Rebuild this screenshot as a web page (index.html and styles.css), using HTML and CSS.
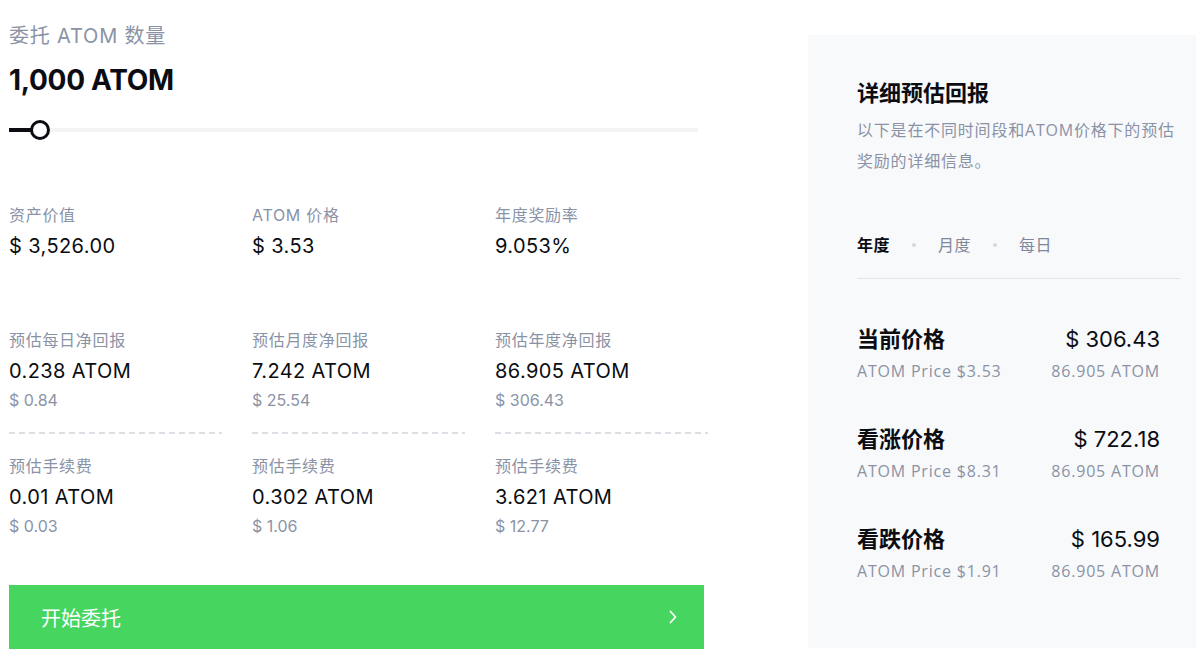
FILE: index.html
```html
<!DOCTYPE html>
<html lang="zh-CN">
<head>
<meta charset="utf-8">
<title>委托计算</title>
<link rel="stylesheet" href="styles.css">
</head>
<body>
<div class="page">
  <section class="calc">
    <div class="amount-label">委托 ATOM 数量</div>
    <div class="amount-value">1,000 ATOM</div>
    <div class="slider">
      <div class="slider-fill"></div>
      <div class="slider-knob"></div>
      <div class="slider-track"></div>
    </div>

    <div class="stats stats-top">
      <div class="stat">
        <div class="stat-label">资产价值</div>
        <div class="stat-value">$ 3,526.00</div>
      </div>
      <div class="stat">
        <div class="stat-label">ATOM 价格</div>
        <div class="stat-value">$ 3.53</div>
      </div>
      <div class="stat">
        <div class="stat-label">年度奖励率</div>
        <div class="stat-value">9.053%</div>
      </div>
    </div>

    <div class="stats stats-mid">
      <div class="stat dashed">
        <div class="stat-label">预估每日净回报</div>
        <div class="stat-value">0.238 ATOM</div>
        <div class="stat-sub">$ 0.84</div>
      </div>
      <div class="stat dashed">
        <div class="stat-label">预估月度净回报</div>
        <div class="stat-value">7.242 ATOM</div>
        <div class="stat-sub">$ 25.54</div>
      </div>
      <div class="stat dashed">
        <div class="stat-label">预估年度净回报</div>
        <div class="stat-value">86.905 ATOM</div>
        <div class="stat-sub">$ 306.43</div>
      </div>
    </div>

    <div class="stats stats-fee">
      <div class="stat">
        <div class="stat-label">预估手续费</div>
        <div class="stat-value">0.01 ATOM</div>
        <div class="stat-sub">$ 0.03</div>
      </div>
      <div class="stat">
        <div class="stat-label">预估手续费</div>
        <div class="stat-value">0.302 ATOM</div>
        <div class="stat-sub">$ 1.06</div>
      </div>
      <div class="stat">
        <div class="stat-label">预估手续费</div>
        <div class="stat-value">3.621 ATOM</div>
        <div class="stat-sub">$ 12.77</div>
      </div>
    </div>

    <button class="cta" type="button">
      <span>开始委托</span>
      <svg class="chev" width="10" height="16" viewBox="0 0 10 16" aria-hidden="true">
        <path d="M2.5 2.5 L7.5 8 L2.5 13.5" fill="none" stroke="#ffffff" stroke-width="1.8" stroke-linecap="round" stroke-linejoin="round"/>
      </svg>
    </button>
  </section>

  <aside class="panel">
    <h2 class="panel-title">详细预估回报</h2>
    <p class="panel-desc">以下是在不同时间段和ATOM价格下的预估奖励的详细信息。</p>
    <div class="tabs">
      <span class="tab active">年度</span>
      <span class="dot"></span>
      <span class="tab">月度</span>
      <span class="dot"></span>
      <span class="tab">每日</span>
    </div>
    <div class="rows">
      <div class="row">
        <div class="row-main">
          <span class="row-title">当前价格</span>
          <span class="row-amount">$ 306.43</span>
        </div>
        <div class="row-sub">
          <span>ATOM Price $3.53</span>
          <span>86.905 ATOM</span>
        </div>
      </div>
      <div class="row">
        <div class="row-main">
          <span class="row-title">看涨价格</span>
          <span class="row-amount">$ 722.18</span>
        </div>
        <div class="row-sub">
          <span>ATOM Price $8.31</span>
          <span>86.905 ATOM</span>
        </div>
      </div>
      <div class="row">
        <div class="row-main">
          <span class="row-title">看跌价格</span>
          <span class="row-amount">$ 165.99</span>
        </div>
        <div class="row-sub">
          <span>ATOM Price $1.91</span>
          <span>86.905 ATOM</span>
        </div>
      </div>
    </div>
  </aside>
</div>
</body>
</html>
```

FILE: styles.css
```css
* { box-sizing: border-box; }

html, body {
  margin: 0;
  padding: 0;
  background: #ffffff;
}

body {
  font-family: "Inter", "Noto Sans CJK SC", sans-serif;
  color: #111318;
  width: 1196px;
  height: 664px;
  overflow: hidden;
}

.page {
  display: flex;
  align-items: flex-start;
}

/* ---------- left calculator ---------- */
.calc {
  width: 808px;
  padding: 22px 0 0 9px;
}

.amount-label {
  font-size: 20px;
  line-height: 28px;
  color: #8a93a6;
  letter-spacing: 0.8px;
}

.amount-value {
  margin-top: 12px;
  font-size: 28px;
  line-height: 36px;
  font-weight: 700;
  letter-spacing: -0.3px;
  color: #0b0d12;
}

.slider {
  margin-top: 22px;
  width: 689px;
  height: 20px;
  display: flex;
  align-items: center;
}

.slider-fill {
  width: 23px;
  height: 4px;
  background: #0b0d12;
}

.slider-knob {
  width: 20px;
  height: 20px;
  border: 3.5px solid #0b0d12;
  border-radius: 50%;
  background: #ffffff;
  margin-left: -2px;
  flex: none;
}

.slider-track {
  flex: 1;
  height: 4px;
  background: #f3f3f4;
}

.stats {
  display: grid;
  grid-template-columns: 213px 213px 213px;
  column-gap: 30px;
}

.stats-top { margin-top: 63px; }
.stats-mid { margin-top: 67px; }

.stat-label {
  font-size: 16px;
  line-height: 24px;
  color: #8a93a6;
  letter-spacing: 0.7px;
}

.stat-value {
  margin-top: 4px;
  font-size: 20px;
  line-height: 30px;
  color: #0b0d12;
  letter-spacing: 0.4px;
}

.stat-sub {
  margin-top: 2px;
  font-size: 16px;
  line-height: 24px;
  color: #8a93a6;
}

.dashed {
  padding-bottom: 20px;
  border-bottom: 2px solid transparent;
  background-image: linear-gradient(to right, #dedfe5 60%, transparent 60%);
  background-size: 10px 2px;
  background-repeat: repeat-x;
  background-position: left bottom;
  background-origin: border-box;
}

.stats-fee .stat { padding-top: 20px; }

.cta {
  margin-top: 47px;
  width: 695px;
  height: 64px;
  border: 0;
  background: #46d65f;
  color: #ffffff;
  font-family: "Inter", "Noto Sans CJK SC", sans-serif;
  font-size: 20px;
  display: flex;
  align-items: center;
  justify-content: space-between;
  padding: 0 26px 0 32px;
  cursor: pointer;
}

.chev { display: block; }

/* ---------- right panel ---------- */
.panel {
  margin-top: 35px;
  width: 388px;
  height: 613px;
  background: #f8f9fb;
  padding: 43px 16px 0 49px;
}

.panel-title {
  margin: 0;
  font-size: 22px;
  line-height: 30px;
  font-weight: 700;
  color: #0b0d12;
}

.panel-desc {
  margin: 7px 0 0;
  font-family: "Open Sans", "Noto Sans CJK SC", sans-serif;
  font-size: 16px;
  line-height: 31px;
  color: #8a93a6;
  letter-spacing: 0.8px;
  width: 326px;
}

.tabs {
  margin-top: 56px;
  display: flex;
  align-items: center;
  gap: 22px;
  padding-bottom: 21px;
  border-bottom: 1px solid #e2e4e9;
}

.tab {
  font-size: 16px;
  line-height: 24px;
  color: #7f889b;
  letter-spacing: 0.5px;
}

.tab.active {
  color: #0b0d12;
  font-weight: 700;
}

.dot {
  width: 4px;
  height: 4px;
  border-radius: 50%;
  background: #d5d8de;
}

.rows {
  padding: 45px 20px 0 0;
  display: flex;
  flex-direction: column;
  gap: 41px;
}

.row-main {
  display: flex;
  justify-content: space-between;
  align-items: center;
  line-height: 30px;
}

.row-title {
  font-size: 22px;
  font-weight: 700;
  color: #0b0d12;
}

.row-amount {
  font-size: 22px;
  color: #0b0d12;
}

.row-sub {
  margin-top: 5px;
  display: flex;
  justify-content: space-between;
  font-family: "Open Sans", "Noto Sans CJK SC", sans-serif;
  font-size: 16px;
  line-height: 24px;
  color: #8a93a6;
  letter-spacing: 0.8px;
}
```
